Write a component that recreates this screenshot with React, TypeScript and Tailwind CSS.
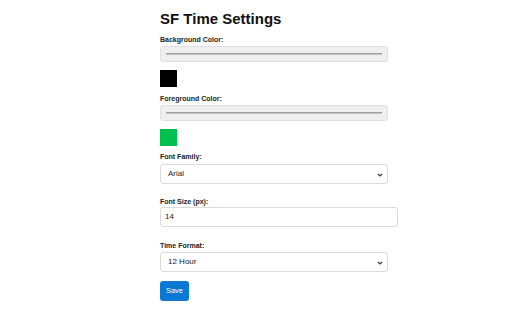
import React from "react";

function Label({ text, className }: { text: string; className: string }) {
  return (
    <div className={`h-[8px] text-[7px] leading-[8px] font-bold text-[#222] ${className}`}>{text}</div>
  );
}

function ColorField({ className }: { className: string }) {
  return (
    <div className={`w-[228px] h-[16px] rounded-[3px] border border-[#e0e0e0] bg-[#efefef] flex items-center px-[5px] ${className}`}>
      <div className="w-full flex flex-col">
        <div className="h-[1px] bg-[#a0a0a0]" />
        <div className="h-[1px] bg-[#c4c4c4]" />
      </div>
    </div>
  );
}

function SelectField({ value, className }: { value: string; className: string }) {
  return (
    <div className={`w-[228px] h-[20px] rounded-[3px] border border-[#dadada] bg-white flex items-center justify-between pl-[7px] pr-[4px] ${className}`}>
      <span className="text-[8px] text-[#222]">{value}</span>
      <svg width="6" height="4" viewBox="0 0 6 4" className="mt-[1px]">
        <path d="M0.8 0.8 L3 3 L5.2 0.8" fill="none" stroke="#333" strokeWidth="1.2" />
      </svg>
    </div>
  );
}

export default function App() {
  return (
    <div className="w-[512px] h-[320px] bg-white pt-[10px] pl-[160px] font-['Liberation_Sans',Arial,sans-serif] flex flex-col items-start">
      <h1 className="h-[18px] text-[15px] leading-[18px] font-bold text-[#111]">SF Time Settings</h1>

      <Label text="Background Color:" className="mt-[8px]" />
      <ColorField className="mt-[2px]" />
      <div className="mt-[8px] w-[17px] h-[17px] bg-black" />

      <Label text="Foreground Color:" className="mt-[8px]" />
      <ColorField className="mt-[2px]" />
      <div className="mt-[8px] w-[17px] h-[17px] bg-[#00c050]" />

      <Label text="Font Family:" className="mt-[7px]" />
      <SelectField value="Arial" className="mt-[3px]" />

      <Label text="Font Size (px):" className="mt-[14px]" />
      <div className="mt-[1px] w-[238px] h-[20px] rounded-[3px] border border-[#dadada] bg-white flex items-center pl-[4px]">
        <span className="text-[8px] text-[#222]">14</span>
      </div>

      <Label text="Time Format:" className="mt-[15px]" />
      <SelectField value="12 Hour" className="mt-[2px]" />

      <button className="mt-[9px] w-[29px] h-[20px] rounded-[3px] bg-[#0a78d4] text-white text-[7.5px] flex items-center justify-center">
        Save
      </button>
    </div>
  );
}
